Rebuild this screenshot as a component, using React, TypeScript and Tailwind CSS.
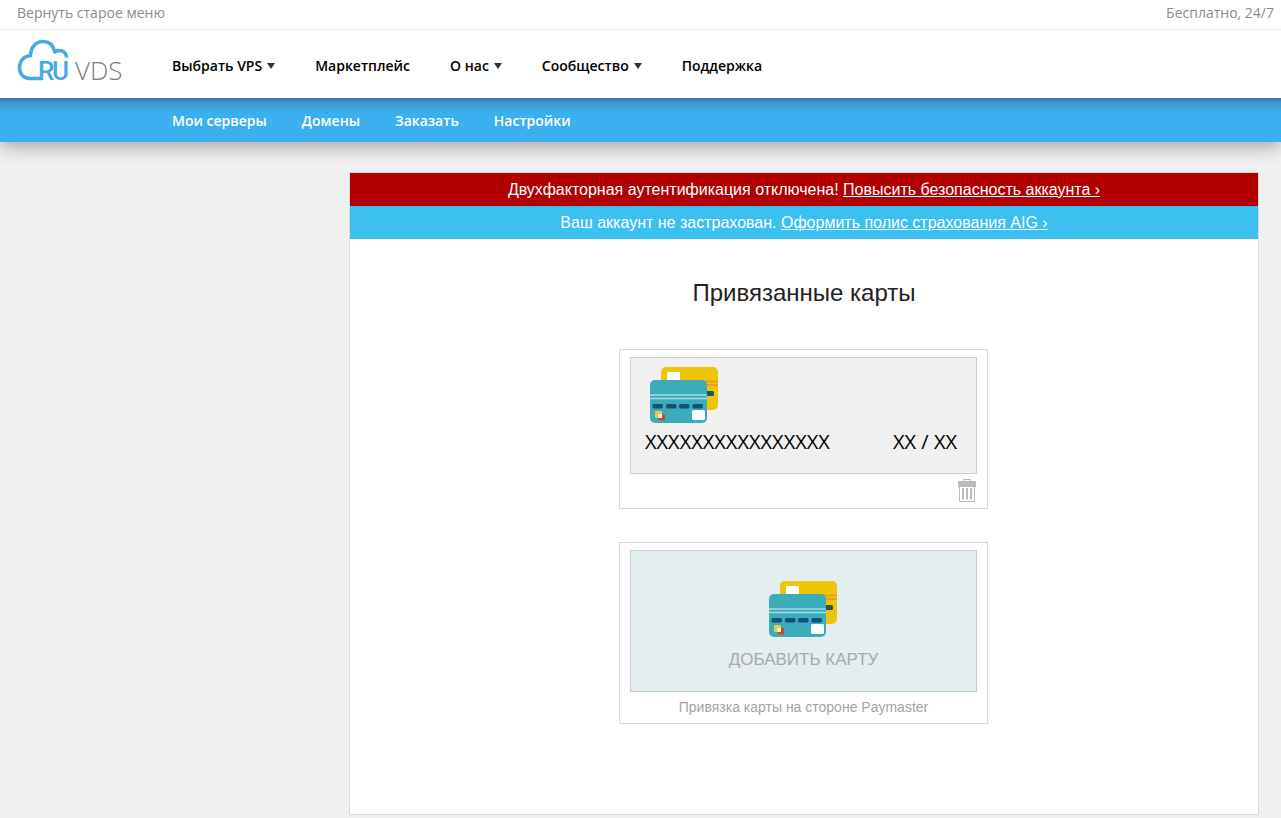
import type { ReactNode } from "react";

const menu = [
  { label: "Выбрать VPS", dropdown: true },
  { label: "Маркетплейс", dropdown: false },
  { label: "О нас", dropdown: true },
  { label: "Сообщество", dropdown: true },
  { label: "Поддержка", dropdown: false },
];

const submenu = ["Мои серверы", "Домены", "Заказать", "Настройки"];

function Logo() {
  return (
    <svg width="116" height="58" viewBox="0 0 116 58" role="img" aria-label="RU VDS">
      <path
        d="M25 40.500H12.500C6.500 40.500 2.500 36 2.500 29.500C2.500 22.500 7 18.300 13.500 17.500C13.800 9.500 18.500 3.500 26 3.500C32 3.500 36 7 37.500 13.200M36.200 14.500C42 10.800 49 12 49.500 19.500"
        fill="none"
        stroke="#43aae3"
        strokeWidth="3.500"
      />
      <g fill="#43aae3" className="font-[Roboto,sans-serif] text-[26px] font-medium">
        <text x="21" y="42">R</text>
        <text x="35" y="42">U</text>
      </g>
      <text x="58" y="42" fill="#7c7c7c" className="font-['Open_Sans',sans-serif] text-[26px] font-light">
        VDS
      </text>
    </svg>
  );
}

function Caret() {
  return (
    <svg width="8" height="6" viewBox="0 0 8 6" aria-hidden="true">
      <path d="M0 0H8L4 6Z" fill="#333" />
    </svg>
  );
}

function CardsIcon() {
  return (
    <svg width="69" height="57" viewBox="0 0 69 57" aria-hidden="true">
      <rect x="11" y="0" width="57" height="43" rx="5" fill="#efc507" />
      <rect x="17" y="5" width="13" height="13" rx="1" fill="#fff" />
      <path d="M50 14.500H68M50 18H68" stroke="#ec8f2d" strokeWidth="1.300" />
      <rect x="53" y="24" width="11" height="5" rx="1.500" fill="#27505a" />
      <rect x="0" y="13" width="57" height="43" rx="5" fill="#3badba" />
      <path d="M0 28H57M0 31.500H57" stroke="#a6dce2" strokeWidth="1.500" />
      <g fill="#14507a">
        <rect x="2.500" y="37" width="10.500" height="4.500" rx="1.500" />
        <rect x="16" y="37" width="10.500" height="4.500" rx="1.500" />
        <rect x="29" y="37" width="10.500" height="4.500" rx="1.500" />
        <rect x="42.500" y="37" width="10.500" height="4.500" rx="1.500" />
      </g>
      <rect x="8.500" y="47" width="6.500" height="6.500" rx="1" fill="#c9472b" />
      <rect x="5" y="44" width="7" height="7" rx="1" fill="#efc93a" />
      <rect x="8.500" y="47" width="3.500" height="4" fill="#fff" />
      <rect x="42" y="43" width="13" height="10" rx="1.500" fill="#fff" />
    </svg>
  );
}

function TrashIcon() {
  return (
    <svg width="18" height="24" viewBox="0 0 18 24" aria-hidden="true">
      <path d="M5.500 2.500V0.500H12.500V2.500" fill="none" stroke="#b9b9b9" />
      <rect x="0" y="2" width="18" height="6" rx="0.500" fill="#bcbcbc" />
      <path d="M1.500 7V22.500H16.500V7" fill="none" stroke="#b9b9b9" />
      <path d="M5 9V20.500M9 9V20.500M13 9V20.500" stroke="#bcbcbc" strokeWidth="2" />
    </svg>
  );
}

function Notice({ color, text, link }: { color: string; text: string; link: string }) {
  return (
    <p className={`h-[33px] text-center text-base leading-[33px] text-white ${color}`}>
      {text}{" "}
      <a href="#" className="underline">
        {link}
      </a>
    </p>
  );
}

function CardFrame({ children }: { children: ReactNode }) {
  return <section className="w-full max-w-[369px] border border-[#d8d8d8] px-[10px] pt-[7px]">{children}</section>;
}

export default function App() {
  return (
    <div className="flex min-h-screen flex-col bg-[#f0f0f0] font-['Liberation_Sans',Arial,sans-serif]">
      <header className="font-['Open_Sans',sans-serif] text-sm">
        <div className="flex h-[30px] items-start justify-between border-b border-[#ececec] bg-white pt-[3px] pr-[7px] pl-[17px] text-[#8c8c8c]">
          <a href="#">Вернуть старое меню</a>
          <span>Бесплатно, 24/7</span>
        </div>
        <div className="relative z-10 flex h-[68px] bg-white">
          <a href="#" className="w-[172px] shrink-0 pt-[8px] pl-[17px]">
            <Logo />
          </a>
          <nav className="flex items-center gap-10 pt-[4px] font-semibold text-black">
            {menu.map((item) => (
              <a key={item.label} href="#" className="flex items-center gap-[5px] whitespace-nowrap">
                {item.label}
                {item.dropdown && <Caret />}
              </a>
            ))}
          </nav>
        </div>
        <nav className="flex h-[44px] items-center gap-[35px] bg-linear-to-b from-[#387ca2] via-[#3a9dd4] via-[6px] to-[#3bafef] to-[16px] pt-[2px] pl-[172px] font-semibold text-white shadow-[0_5px_18px_rgba(0,0,0,0.3)]">
          {submenu.map((label) => (
            <a key={label} href="#">
              {label}
            </a>
          ))}
        </nav>
      </header>

      <main className="flex-1 pt-[30px] pr-[22px] pb-[3px] pl-[349px]">
        <div className="flex min-h-[643px] flex-col border border-[#d8d8d8] bg-white">
          <Notice color="bg-[#b20000]" text="Двухфакторная аутентификация отключена!" link="Повысить безопасность аккаунта ›" />
          <Notice color="bg-[#3bc0f0]" text="Ваш аккаунт не застрахован." link="Оформить полис страхования AIG ›" />
          <h1 className="mt-[38px] text-center text-2xl text-[#222]">Привязанные карты</h1>
          <div className="mt-10 flex flex-col items-center gap-[33px] pr-px">
            <CardFrame>
              <div className="h-[117px] border border-[#cfcfcf] bg-[#f0f0f0] pt-[9px] pr-[19px] pl-[14px]">
                <div className="pl-[5px]">
                  <CardsIcon />
                </div>
                <div className="mt-1 flex justify-between font-['Open_Sans',sans-serif] text-xl text-black">
                  <span>XXXXXXXXXXXXXXXX</span>
                  <span>XX / XX</span>
                </div>
              </div>
              <div className="flex h-[34px] justify-end pt-[5px] pr-px">
                <button type="button" aria-label="Удалить карту" className="h-6 cursor-pointer">
                  <TrashIcon />
                </button>
              </div>
            </CardFrame>
            <CardFrame>
              <button
                type="button"
                className="flex h-[142px] w-full cursor-pointer flex-col items-center border border-[#c3cdd0] bg-[#e4edf0] pt-[30px] text-[17px] leading-7 text-[#a9a9a9]"
              >
                <CardsIcon />
                <span className="mt-2">ДОБАВИТЬ КАРТУ</span>
              </button>
              <p className="h-[31px] text-center text-sm leading-[31px] text-[#a3a3a3]">
                Привязка карты на стороне Paymaster
              </p>
            </CardFrame>
          </div>
        </div>
      </main>
    </div>
  );
}
